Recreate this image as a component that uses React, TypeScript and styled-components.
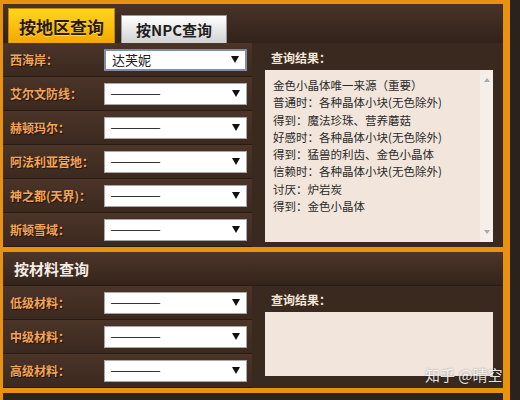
import React from "react";
import styled, { createGlobalStyle } from "styled-components";

const Global = createGlobalStyle`
  html, body { margin: 0; padding: 0; background: #2b221d; }
  body { font-family: "Noto Sans CJK SC", "Noto Sans", sans-serif; width: 520px; height: 400px; overflow: hidden; }
  * { box-sizing: border-box; }
`;

const Frame = styled.div`
  position: relative;
  width: 510px;
  border-left: 3px solid #e8920e;
  border-right: 7px solid #e8920e;
  border-top: 4px solid #e8920e;
  background: #3a2a20;
`;

const Section = styled.div`
  display: flex;
  flex-direction: column;
`;

const TabBar = styled.div`
  display: flex;
  align-items: flex-end;
  gap: 6px;
  height: 39px;
  padding-left: 5px;
  background: linear-gradient(#4a3328, #31221a);
`;

const Tab = styled.div<{ $active?: boolean }>`
  display: flex;
  align-items: center;
  justify-content: center;
  width: ${(p) => (p.$active ? 107 : 106)}px;
  height: ${(p) => (p.$active ? 35 : 28)}px;
  font-weight: 700;
  font-size: ${(p) => (p.$active ? 17 : 15)}px;
  color: ${(p) => (p.$active ? "#2a180c" : "#1e1e1e")};
  background: ${(p) =>
    p.$active
      ? "linear-gradient(#ffd61e, #f4a800)"
      : "linear-gradient(#ffffff, #d2d2d2)"};
  border: 1px solid ${(p) => (p.$active ? "#c88400" : "#9a9a9a")};
  border-bottom: none;
  text-shadow: ${(p) => (p.$active ? "0 1px 0 rgba(255,240,160,0.6)" : "none")};
`;

const Header = styled.div`
  display: flex;
  align-items: center;
  height: 34px;
  padding-left: 11px;
  font-size: 15px;
  font-weight: 700;
  color: #f4ece4;
  background: linear-gradient(#4d3529, #33241b);
  border-bottom: 1px solid #2a1c14;
`;

const Body = styled.div`
  display: flex;
`;

const LeftCol = styled.div`
  width: 249px;
  display: flex;
  flex-direction: column;
`;

const Row = styled.div`
  display: flex;
  align-items: center;
  height: 34px;
  padding-left: 7px;
  background: linear-gradient(#4b3428, #3b291f);
  border-bottom: 1px solid #2a1b13;
`;

const Label = styled.div`
  width: 94px;
  font-size: 12px;
  font-weight: 700;
  color: #f2a458;
  text-shadow: 1px 1px 1px #1e120a;
  white-space: nowrap;
`;

const Select = styled.div<{ $focus?: boolean }>`
  display: flex;
  align-items: center;
  justify-content: space-between;
  width: 143px;
  height: 22px;
  padding: 0 6px 0 6px;
  background: #ffffff;
  border: ${(p) => (p.$focus ? "2px solid #7f8cab" : "1px solid #a8a8a8")};
  font-size: 13px;
  color: #222;
`;

const Dashes = styled.span`
  font-family: "Liberation Sans", sans-serif;
  font-size: 13px;
  color: #333;
  letter-spacing: -1px;
`;

const Arrow = styled.span`
  width: 0;
  height: 0;
  border-left: 4px solid transparent;
  border-right: 4px solid transparent;
  border-top: 7px solid #111;
`;

const RightCol = styled.div<{ $top: number }>`
  flex: 1;
  display: flex;
  flex-direction: column;
  padding: ${(p) => p.$top}px 10px 0 13px;
  background: #39291f;
`;

const ResultLabel = styled.div`
  font-size: 12px;
  font-weight: 700;
  color: #f2e6da;
  padding-left: 6px;
  height: 16px;
  line-height: 16px;
  margin-bottom: 4px;
`;

const ResultBox = styled.div<{ $h: number }>`
  position: relative;
  height: ${(p) => p.$h}px;
  background: #f2e5db;
  padding: 7px 16px 0 8px;
  font-size: 11.5px;
  line-height: 17.3px;
  color: #2a2a2a;
  white-space: nowrap;
`;

const ScrollBar = styled.div`
  position: absolute;
  top: 0;
  right: 0;
  width: 13px;
  height: 100%;
  background: #f6eee8;
  display: flex;
  flex-direction: column;
  justify-content: space-between;
  align-items: center;
  padding: 8px 0;
`;

const ScrollArrow = styled.span<{ $up?: boolean }>`
  width: 0;
  height: 0;
  border-left: 3px solid transparent;
  border-right: 3px solid transparent;
  ${(p) => (p.$up ? "border-bottom: 4px solid #a9a9a9;" : "border-top: 4px solid #a9a9a9;")}
`;

const Divider = styled.div`
  height: 5px;
  background: #e8920e;
`;

const Below = styled.div`
  height: 7px;
  background: #2d2320;
`;

const Watermark = styled.div`
  position: absolute;
  left: 422px;
  top: 360px;
  font-size: 15px;
  color: rgba(255, 255, 255, 0.88);
  text-shadow: 0 0 2px rgba(0,0,0,0.4);
  white-space: nowrap;
`;

const regions = ["西海岸：", "艾尔文防线：", "赫顿玛尔：", "阿法利亚营地：", "神之都(天界)：", "斯顿雪域："];
const materials = ["低级材料：", "中级材料：", "高级材料："];
const results = [
  "金色小晶体唯一来源（重要）",
  "普通时：各种晶体小块(无色除外)",
  "得到：魔法珍珠、营养蘑菇",
  "好感时：各种晶体小块(无色除外)",
  "得到：猛兽的利齿、金色小晶体",
  "信赖时：各种晶体小块(无色除外)",
  "讨厌：炉岩炭",
  "得到：金色小晶体",
];

const SelectRow = ({ label, value }: { label: string; value?: string }) => (
  <Row>
    <Label>{label}</Label>
    <Select $focus={!!value}>
      {value ? <span>{value}</span> : <Dashes>————</Dashes>}
      <Arrow />
    </Select>
  </Row>
);

export default function App() {
  return (
    <>
      <Global />
      <Frame>
        <Section>
          <TabBar>
            <Tab $active>按地区查询</Tab>
            <Tab>按NPC查询</Tab>
          </TabBar>
          <Body>
            <LeftCol>
              {regions.map((r, i) => (
                <SelectRow key={r} label={r} value={i === 0 ? "达芙妮" : undefined} />
              ))}
            </LeftCol>
            <RightCol $top={7}>
              <ResultLabel>查询结果：</ResultLabel>
              <ResultBox $h={172}>
                {results.map((t, i) => (
                  <div key={i}>{t}</div>
                ))}
                <ScrollBar>
                  <ScrollArrow $up />
                  <ScrollArrow />
                </ScrollBar>
              </ResultBox>
            </RightCol>
          </Body>
        </Section>
        <Divider />
        <Section>
          <Header>按材料查询</Header>
          <Body>
            <LeftCol>
              {materials.map((m) => (
                <SelectRow key={m} label={m} />
              ))}
            </LeftCol>
            <RightCol $top={6}>
              <ResultLabel>查询结果：</ResultLabel>
              <ResultBox $h={64} />
            </RightCol>
          </Body>
        </Section>
        <Divider />
        <Below />
        <Watermark>知乎 @晴空</Watermark>
      </Frame>
    </>
  );
}
